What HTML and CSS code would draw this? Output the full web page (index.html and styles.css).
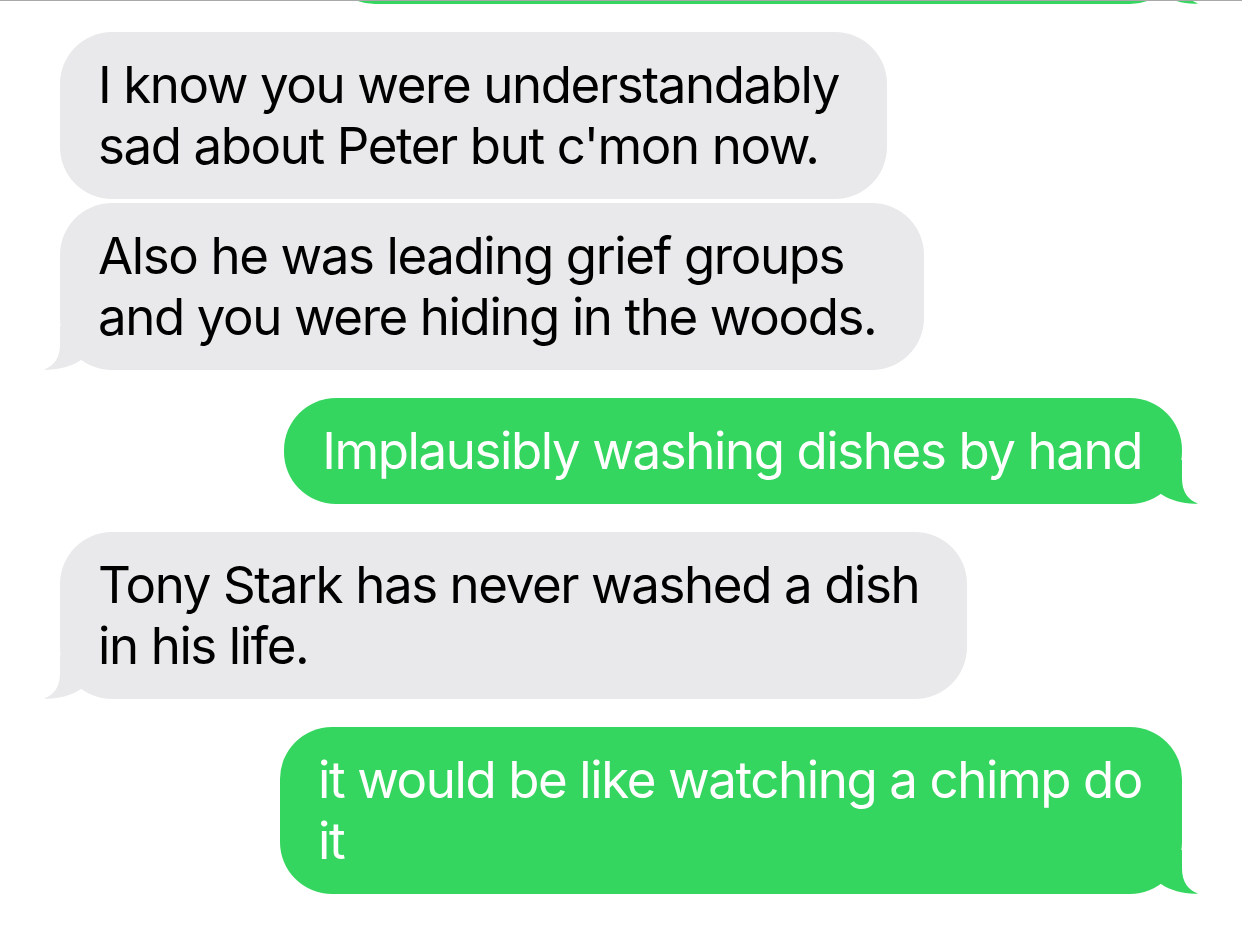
FILE: index.html
```html
<!doctype html>
<html>

<head>
    <meta charset="utf-8">
    <title>Messages</title>
    <link rel="stylesheet" href="styles.css">
</head>

<body>
    <div class="thread">
        <div class="msg sent stub">
            <svg class="tail" viewBox="0 0 60 44"><path d="M17 0 L17 18 C17 32 11 40 1 43.5 C12 44.5 28 41 38 34 L40 34 L40 0 Z" /></svg>
        </div>

        <div class="msg recv">I know you were understandably<br>sad about Peter but c'mon now.</div>

        <div class="msg recv cont">Also he was leading grief groups<br>and you were hiding in the woods.<svg class="tail" viewBox="0 0 60 44"><path d="M17 0 L17 18 C17 32 11 40 1 43.5 C12 44.5 28 41 38 34 L40 34 L40 0 Z" /></svg></div>

        <div class="msg sent">Implausibly washing dishes by hand<svg class="tail" viewBox="0 0 60 44"><path d="M17 0 L17 18 C17 32 11 40 1 43.5 C12 44.5 28 41 38 34 L40 34 L40 0 Z" /></svg></div>

        <div class="msg recv">Tony Stark has never washed a dish<br>in his life.<svg class="tail" viewBox="0 0 60 44"><path d="M17 0 L17 18 C17 32 11 40 1 43.5 C12 44.5 28 41 38 34 L40 34 L40 0 Z" /></svg></div>

        <div class="msg sent">it would be like watching a chimp do<br>it<svg class="tail" viewBox="0 0 60 44"><path d="M17 0 L17 18 C17 32 11 40 1 43.5 C12 44.5 28 41 38 34 L40 34 L40 0 Z" /></svg></div>
    </div>
</body>

</html>
```

FILE: styles.css
```css
html,
body {
    margin: 0;
    background: #fff;
}

body {
    font-family: Inter, "Liberation Sans", sans-serif;
    font-size: 51px;
    line-height: 61px;
    letter-spacing: -1.4px;
}

.thread {
    height: 932px;
    overflow: hidden;
    border-top: 1px solid #a9a9a9;
    display: flex;
    flex-direction: column;
    padding: 0 60px;
}

.msg {
    position: relative;
    border-radius: 52px;
    margin-top: 28px;
    white-space: nowrap;
}

.msg.cont {
    margin-top: 4px;
}

.recv {
    align-self: flex-start;
    padding: 22px 48px 23px 38px;
    background: #e9e9eb;
    color: #000;
}

.sent {
    align-self: flex-end;
    padding: 22px 40px 23px 38px;
    background: #35d660;
    color: #fff;
}

.stub {
    width: 781px;
    height: 61px;
    margin-top: -103px;
}

.tail {
    position: absolute;
    bottom: 0;
    width: 60px;
    height: 44px;
}

.recv .tail {
    left: -17px;
    fill: #e9e9eb;
}

.sent .tail {
    right: -17px;
    fill: #35d660;
    transform: scaleX(-1);
}
```
